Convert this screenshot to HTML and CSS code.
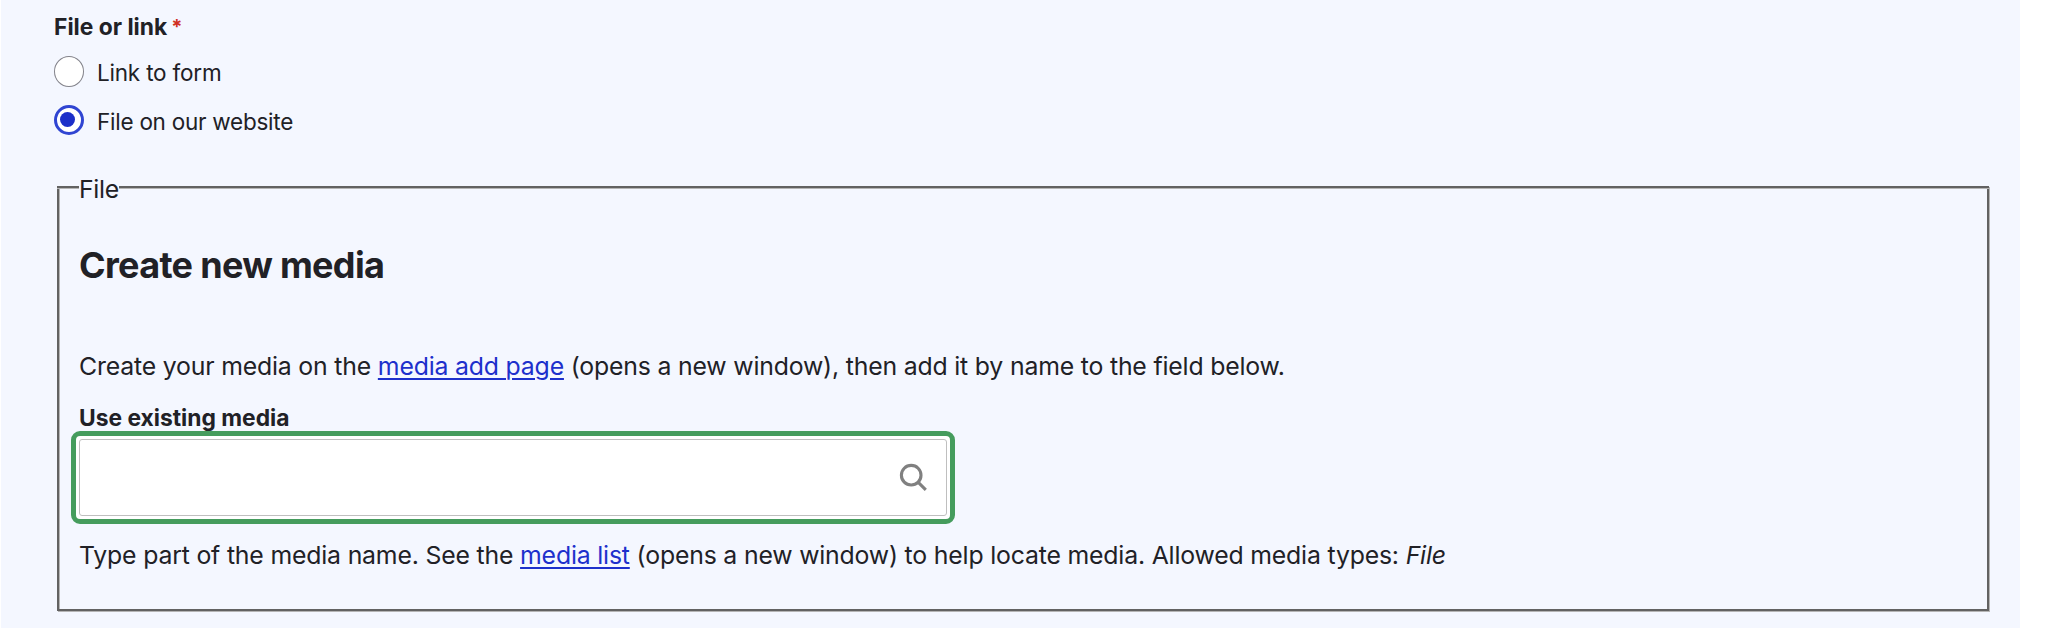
FILE: index.html
```html
<!DOCTYPE html>
<html lang="en">
<head>
<meta charset="utf-8">
<title>File or link</title>
<link rel="stylesheet" href="styles.css">
</head>
<body>
<form class="panel">
  <div class="group-label"><span class="group-text">File or link</span><span class="required">*</span></div>
  <div class="options">
    <label class="option"><span class="radio"></span><span class="option-text">Link to form</span></label>
    <label class="option"><span class="radio radio-checked"></span><span class="option-text option-text-second">File on our website</span></label>
  </div>
  <section class="fieldset">
    <div class="top-line"><span class="line-start"></span><span class="legend">File</span><span class="line-rest"></span></div>
    <div class="fieldset-body">
      <h2 class="heading"><span>Create new media</span></h2>
      <p class="intro"><span>Create your media on the <a class="link" href="#">media add page</a> (opens a new window), then add it by name to the field below.</span></p>
      <div class="field-label"><span>Use existing media</span></div>
      <div class="focus-ring">
        <div class="input">
          <svg class="search-icon" width="30" height="30" viewBox="0 0 30 30" fill="none" stroke="#808080" stroke-width="3.1"><circle cx="12.2" cy="12.2" r="9.8"/><path d="M18.8 18.8l8 8"/></svg>
        </div>
      </div>
      <p class="help"><span>Type part of the media name. See the <a class="link" href="#">media list</a> (opens a new window) to help locate media. Allowed media types: <em>File</em></span></p>
    </div>
  </section>
</form>
</body>
</html>
```
FILE: styles.css
```css
* { box-sizing: border-box; }
body {
  margin: 0;
  background: #fff;
  color: #212126;
  font-family: Inter, "Liberation Sans", sans-serif;
}
.panel {
  display: flow-root;
  width: 2019px;
  height: 628px;
  margin-left: 1px;
  padding-left: 53px;
  background: #f4f7ff;
}
.group-label {
  display: flex;
  gap: 4px;
  height: 30px;
  margin-top: 12px;
  font-size: 22.8px;
  font-weight: 700;
  line-height: 30px;
}
.required {
  color: #d0301f;
  font-size: 20px;
}
.options {
  display: flex;
  flex-direction: column;
  gap: 17px;
  margin-top: 14px;
}
.option {
  display: flex;
  align-items: center;
  gap: 13px;
  height: 31px;
}
.radio {
  display: grid;
  place-items: center;
  width: 30px;
  height: 31px;
  border: 1px solid #83838b;
  border-radius: 50%;
  background: #fff;
}
.radio-checked {
  height: 30px;
  border: 3px solid #3045d2;
}
.radio-checked::before {
  content: "";
  width: 15px;
  height: 15px;
  margin-right: 3px;
  border-radius: 50%;
  background: #1c2fc9;
}
.option-text {
  padding-top: 3px;
  font-size: 22.5px;
  line-height: 28px;
  letter-spacing: -0.2px;
}
.option-text-second { padding-top: 5px; letter-spacing: -0.25px; }
.fieldset {
  width: 1932px;
  height: 425px;
  margin: 51px 0 0 3px;
  border: solid #626262;
  border-width: 0 2px 2px;
  box-shadow: 1px 1px 0 #b5b5b5, inset 1px 0 0 #b5b5b5;
}
.top-line {
  display: flex;
  margin: 0 -2px;
  height: 3px;
}
.line-start, .line-rest {
  height: 3px;
  border-top: 2px solid #626262;
  border-bottom: 1px solid #b5b5b5;
}
.line-start { width: 22px; }
.line-rest { flex: 1; }
.legend {
  width: 40px;
  height: 30px;
  margin-top: -12px;
  font-size: 24.8px;
  line-height: 30px;
  letter-spacing: -0.3px;
  white-space: nowrap;
}
.fieldset-body { padding: 0 0 0 20px; }
p, h2 { margin: 0; }
.heading {
  padding-top: 54px;
  font-size: 36px;
  line-height: 44px;
  font-weight: 700;
  letter-spacing: -0.68px;
}
.intro, .help {
  font-size: 24.8px;
  line-height: 36px;
  letter-spacing: -0.175px;
  white-space: nowrap;
}
.intro { margin-top: 61px; }
.link {
  color: #1d30cc;
  text-decoration: underline;
  text-decoration-thickness: 2px;
  text-underline-offset: 3px;
}
.field-label {
  margin-top: 20px;
  font-size: 22.8px;
  line-height: 28px;
  font-weight: 700;
}
.focus-ring {
  width: 884px;
  height: 93px;
  margin: -1px 0 0 -8px;
  padding: 3px;
  border: 5px solid #459c5d;
  border-radius: 9px;
  background: #fff;
}
.input {
  display: flex;
  align-items: center;
  justify-content: flex-end;
  height: 77px;
  padding-right: 17px;
  border: 1px solid #bfbfbf;
  border-radius: 3px;
  background: #fff;
}
.help { margin-top: 13px; }
```
